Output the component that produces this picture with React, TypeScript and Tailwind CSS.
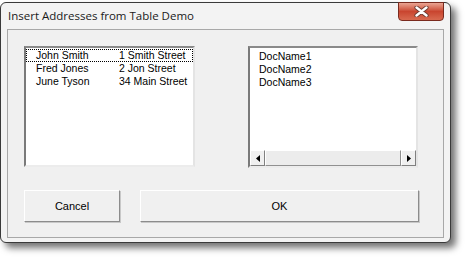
const rows = [
  { name: "John Smith", addr: "1 Smith Street" },
  { name: "Fred Jones", addr: "2 Jon Street" },
  { name: "June Tyson", addr: "34 Main Street" },
];

const docs = ["DocName1", "DocName2", "DocName3"];

function Arrow({ dir }: { dir: "left" | "right" }) {
  return (
    <div className="w-[15px] h-full flex items-center justify-center bg-[#f0f0f0] border border-t-white border-l-white border-r-[#808080] border-b-[#808080]">
      <svg width="4" height="7" viewBox="0 0 4 7">
        {dir === "left" ? <path d="M4 0 L0 3.5 L4 7 Z" fill="#000" /> : <path d="M0 0 L4 3.5 L0 7 Z" fill="#000" />}
      </svg>
    </div>
  );
}

export default function App() {
  return (
    <div className="w-[466px] h-[260px] bg-white pt-[2px]" style={{ fontFamily: "'Liberation Sans', Arial, sans-serif" }}>
      <div className="relative w-[451px] h-[241px] rounded-[6px] border border-[#3a3a3a] bg-[#f3f3f3] shadow-[5px_5px_7px_rgba(0,0,0,0.55)] flex flex-col">
        <div className="h-[26px] flex items-center pl-[7px] text-[11.5px] text-[#1a1a1a]" style={{ fontFamily: "'Open Sans', 'Liberation Sans', sans-serif" }}>
          Insert Addresses from Table Demo
        </div>
        <div className="absolute right-[6px] top-[-1px] w-[46px] h-[19px] rounded-b-[4px] border border-[#7a2a1e] bg-gradient-to-b from-[#e9a493] via-[#c9452f] to-[#d86a50] flex items-center justify-center">
          <svg width="15" height="11" viewBox="0 0 15 11">
            <path d="M2.5 1.5 L7.5 5.5 L12.5 1.5 M2.5 9.5 L7.5 5.5 L12.5 9.5" stroke="#6a3a30" strokeWidth="4.2" strokeLinecap="round" fill="none" />
            <path d="M2.5 1.5 L7.5 5.5 L12.5 1.5 M2.5 9.5 L7.5 5.5 L12.5 9.5" stroke="#fff" strokeWidth="2.4" strokeLinecap="round" fill="none" />
          </svg>
        </div>
        <div className="mx-[6px] mb-[4px] flex-1 border border-[#a8a8a8] bg-[#f0f0f0] pl-[16px] pt-[16px] flex flex-col">
          <div className="flex">
            <div className="w-[171px] h-[121px] bg-white border-2 border-t-[#8a8a8a] border-l-[#7a7a7a] border-r-[#e4e4e4] border-b-[#ececec] pt-[1px] text-[10.5px] text-black">
              {rows.map((r, i) => (
                <div
                  key={r.name}
                  className={`h-[13px] flex items-center leading-none ${i === 0 ? "border border-dotted border-black" : "border border-transparent"}`}
                >
                  <span className="w-[92px] pl-[9px]">{r.name}</span>
                  <span>{r.addr}</span>
                </div>
              ))}
            </div>
            <div className="ml-[53px] w-[170px] h-[122px] bg-white border-2 border-t-[#8a8a8a] border-l-[#7a7a7a] border-r-[#e4e4e4] border-b-[#ececec] flex flex-col text-[10.5px] text-black">
              <div className="flex-1 pt-[2px] pl-[9px]">
                {docs.map((d) => (
                  <div key={d} className="h-[13px] flex items-center leading-none">
                    {d}
                  </div>
                ))}
              </div>
              <div className="h-[16px] flex bg-[#f0f0f0]">
                <Arrow dir="left" />
                <div className="flex-1 border border-t-white border-l-white border-r-[#909090] border-b-[#909090] bg-[#ececec]" />
                <Arrow dir="right" />
              </div>
            </div>
          </div>
          <div className="flex mt-[22px] text-[11px] text-black">
            <button className="w-[96px] h-[32px] bg-[#f0f0f0] border border-t-white border-l-white border-r-[#8c8c8c] border-b-[#8c8c8c] shadow-[1px_1px_0_#c8c8c8]">
              Cancel
            </button>
            <button className="ml-[20px] w-[279px] h-[32px] bg-[#f0f0f0] border border-t-white border-l-white border-r-[#8c8c8c] border-b-[#8c8c8c] shadow-[1px_1px_0_#c8c8c8]">
              OK
            </button>
          </div>
        </div>
      </div>
    </div>
  );
}
